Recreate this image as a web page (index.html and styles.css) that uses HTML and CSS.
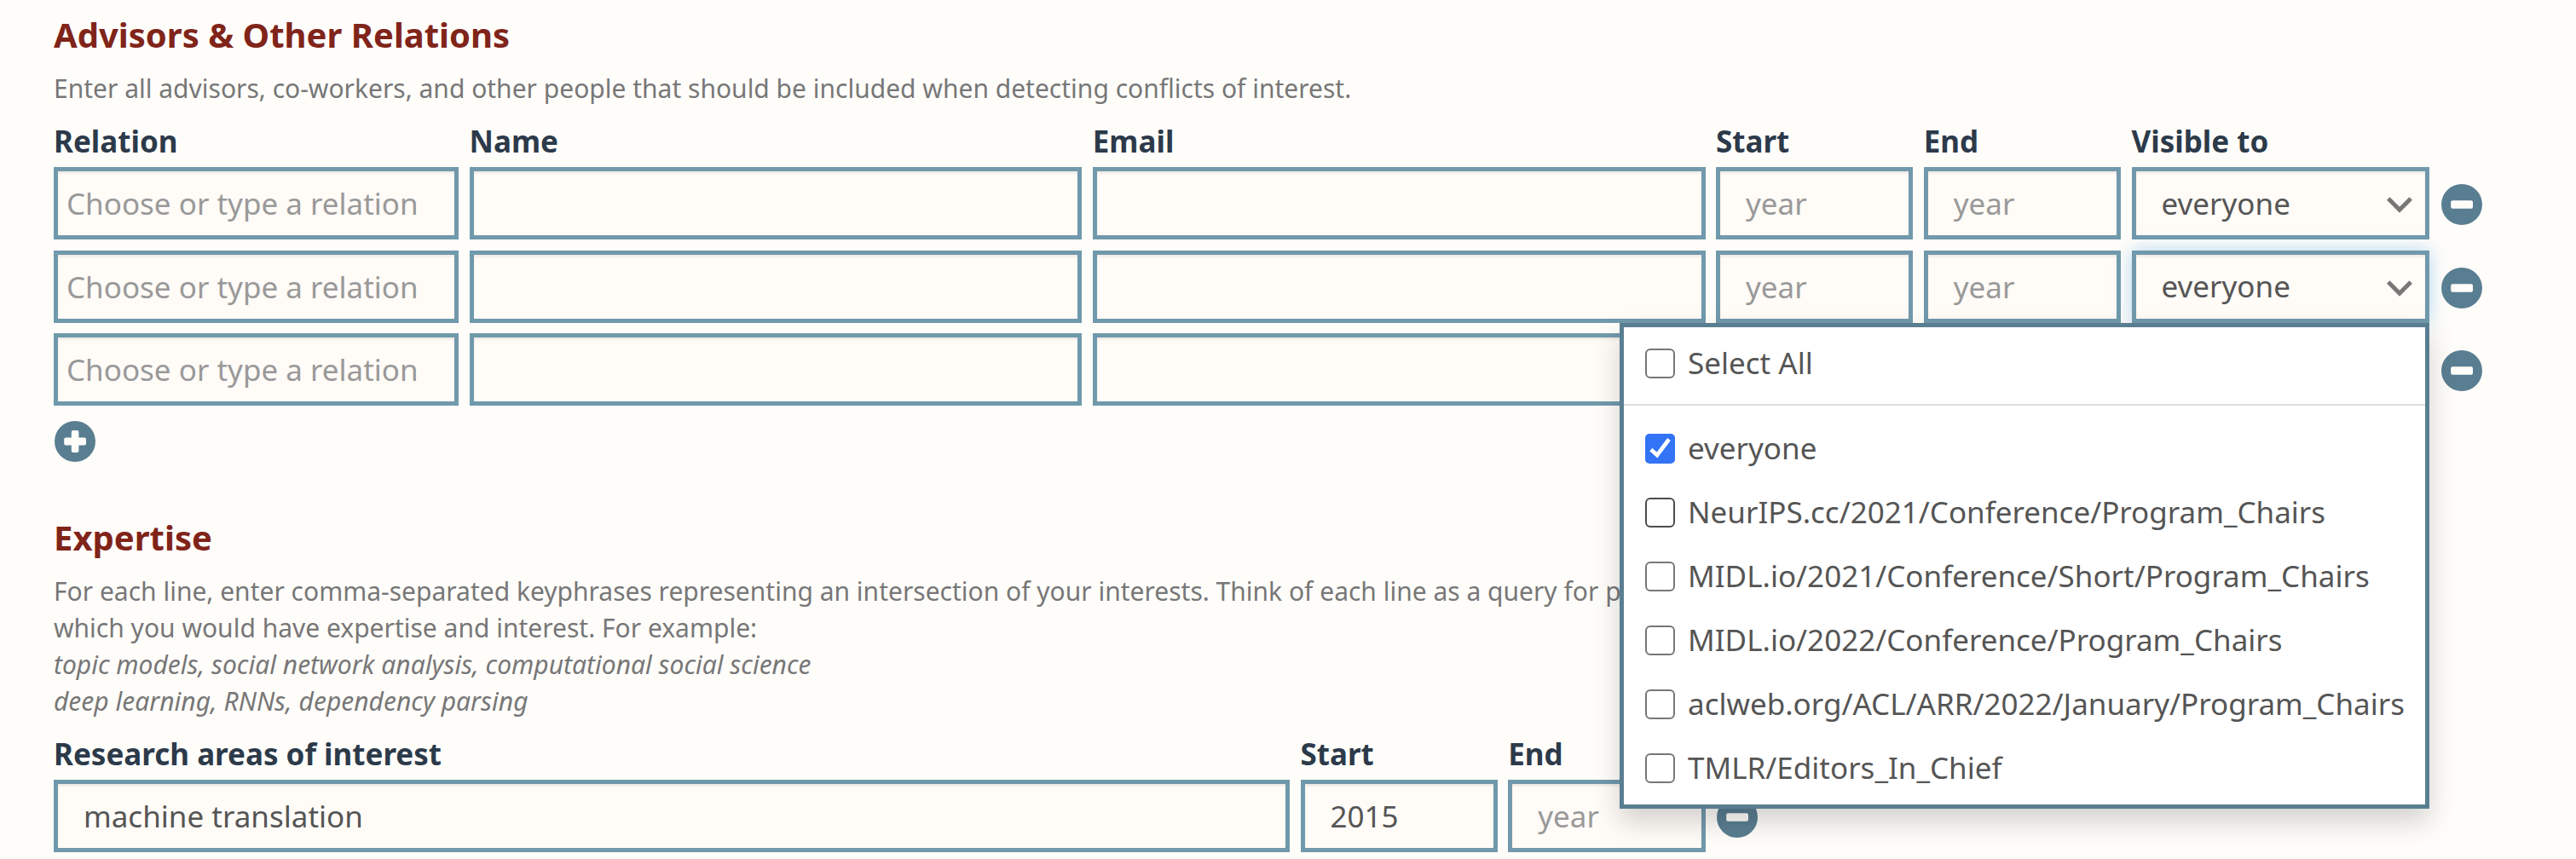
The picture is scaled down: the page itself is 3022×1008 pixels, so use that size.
FILE: index.html
```
<!DOCTYPE html>
<html lang="en">
<head>
<meta charset="utf-8">
<title>Edit Profile</title>
<link rel="stylesheet" href="styles.css">
</head>
<body>
<svg class="sprite" aria-hidden="true">
  <symbol id="minus" viewBox="0 0 48 48"><circle cx="24" cy="24" r="24" fill="#5a7e91"/><rect x="11.2" y="19.3" width="25.8" height="9.4" rx="2" fill="#fffdfa"/></symbol>
  <symbol id="plus" viewBox="0 0 48 48"><circle cx="24" cy="24" r="24" fill="#5a7e91"/><rect x="11.2" y="19.6" width="25.8" height="8.8" rx="2" fill="#fffdfa"/><rect x="19.8" y="11" width="8.6" height="26" rx="2" fill="#fffdfa"/></symbol>
  <symbol id="chevron" viewBox="0 0 30 19"><path d="M1.8 1.9 L15 15.2 L28.2 1.9" fill="none" stroke="#777" stroke-width="5"/></symbol>
</svg>
<main class="page">
  <section class="relations">
    <h4 class="title">Advisors &amp; Other Relations</h4>
    <p class="instructions">Enter all advisors, co-workers, and other people that should be included when detecting conflicts of interest.</p>
    <div class="row labels">
      <span>Relation</span><span>Name</span><span>Email</span><span>Start</span><span>End</span><span>Visible to</span>
    </div>
    <div class="rows">
      <div class="row">
        <div class="field tight hint">Choose or type a relation</div><div class="field"></div><div class="field"></div><div class="field hint">year</div><div class="field hint">year</div>
        <div class="field select"><span>everyone</span><svg class="chevron"><use href="#chevron"/></svg></div>
        <svg class="icon"><use href="#minus"/></svg>
      </div>
      <div class="row">
        <div class="field tight hint">Choose or type a relation</div><div class="field"></div><div class="field"></div><div class="field hint">year</div><div class="field hint">year</div>
        <div class="dropdown">
          <div class="field select focused"><span>everyone</span><svg class="chevron"><use href="#chevron"/></svg></div>
          <div class="menu">
            <div class="all"><i class="box"></i>Select All</div>
            <div class="options">
              <div class="option"><i class="box checked"><svg viewBox="0 0 35 35"><path d="M6.8 18.5 L14 25 L28 6.5" fill="none" stroke="#fff" stroke-width="4.6"/></svg></i>everyone</div>
              <div class="option"><i class="box hovered"></i>NeurIPS.cc/2021/Conference/Program_Chairs</div>
              <div class="option"><i class="box"></i>MIDL.io/2021/Conference/Short/Program_Chairs</div>
              <div class="option"><i class="box"></i>MIDL.io/2022/Conference/Program_Chairs</div>
              <div class="option"><i class="box"></i>aclweb.org/ACL/ARR/2022/January/Program_Chairs</div>
              <div class="option"><i class="box"></i>TMLR/Editors_In_Chief</div>
            </div>
          </div>
        </div>
        <svg class="icon"><use href="#minus"/></svg>
      </div>
      <div class="row">
        <div class="field tight hint">Choose or type a relation</div><div class="field"></div><div class="field"></div><div class="field"></div><div class="field"></div>
        <div class="field select"></div>
        <svg class="icon"><use href="#minus"/></svg>
      </div>
    </div>
    <svg class="icon add"><use href="#plus"/></svg>
  </section>
  <section class="expertise">
    <h4 class="title">Expertise</h4>
    <p class="instructions">For each line, enter comma-separated keyphrases representing an intersection of your interests. Think of each line as a query for p<br>which you would have expertise and interest. For example:<br><em>topic models, social network analysis, computational social science</em><br><em>deep learning, RNNs, dependency parsing</em></p>
    <div class="row areas labels"><span>Research areas of interest</span><span>Start</span><span>End</span></div>
    <div class="rows">
      <div class="row areas">
        <div class="field">machine translation</div><div class="field">2015</div><div class="field hint">year</div>
        <svg class="icon"><use href="#minus"/></svg>
      </div>
    </div>
  </section>
</main>
</body>
</html>
```
FILE: styles.css
```
* { box-sizing: border-box; }
body {
  margin: 0;
  height: 1008px;
  overflow: hidden;
  background: #fffdfa;
  color: #555;
  font: 35px/50px "Noto Sans", sans-serif;
}
.sprite { display: none; }
.page { padding: 16px 63px 0; }
.title { margin: 0; font-size: 40px; line-height: 50px; font-weight: 700; color: #80241a; }
.instructions { margin: 17px 0 0; font-size: 30px; line-height: 42.857px; color: #777; white-space: nowrap; }
.row {
  display: grid;
  grid-template-columns: 475px 718.75px 718.75px 231.25px 231.25px 349.5px 48px;
  column-gap: 12.5px;
}
.areas { grid-template-columns: 1450px 231.25px 231.25px 48px; }
.labels { margin-top: 15px; font-weight: 700; color: #2c3a4a; }
.rows { display: grid; row-gap: 12.5px; margin-top: 5.4px; }
.field {
  height: 85px;
  padding: 0 30px;
  border: 5px solid #7199ac;
  background: #fffbf7;
  box-shadow: inset 0 2.5px 2.5px rgba(0, 0, 0, .075);
  line-height: 75px;
  white-space: nowrap;
}
.tight { padding: 0 10px; }
.hint { color: #999; }
.select { display: flex; justify-content: space-between; padding-right: 15px; }
.focused { box-shadow: inset 0 2.5px 2.5px rgba(0, 0, 0, .075), 0 0 20px rgba(102, 175, 233, .5); }
.focused span { margin-top: -1px; }
.chevron { width: 30px; height: 19px; margin-top: 30px; }
.icon { display: block; width: 48px; height: 48px; margin: 20px 0 0 1px; }
.add { margin: 18px 0 0 1px; }
.dropdown { position: relative; }
.menu {
  position: absolute;
  z-index: 2;
  top: 85px;
  right: 0;
  width: 950px;
  height: 570px;
  border: 5px solid #5a7e91;
  background: #fff;
  box-shadow: 0 15px 30px rgba(0, 0, 0, .175);
}
.all, .option { display: flex; align-items: center; gap: 15px; padding-left: 25px; white-space: nowrap; }
.all { height: 92.5px; padding-bottom: 7px; border-bottom: 2px solid #ddd; }
.options { padding-top: 12px; }
.option { height: 75px; }
.box { width: 35px; height: 35px; margin-top: 2px; border: 2px solid #777; border-radius: 6px; background: #fff; }
.hovered { border-color: #4d4d4d; }
.checked { border: 0; border-radius: 5px; background: #3374f6; }
.checked svg { display: block; width: 35px; height: 35px; }
.expertise { margin-top: 64.2px; }
```
